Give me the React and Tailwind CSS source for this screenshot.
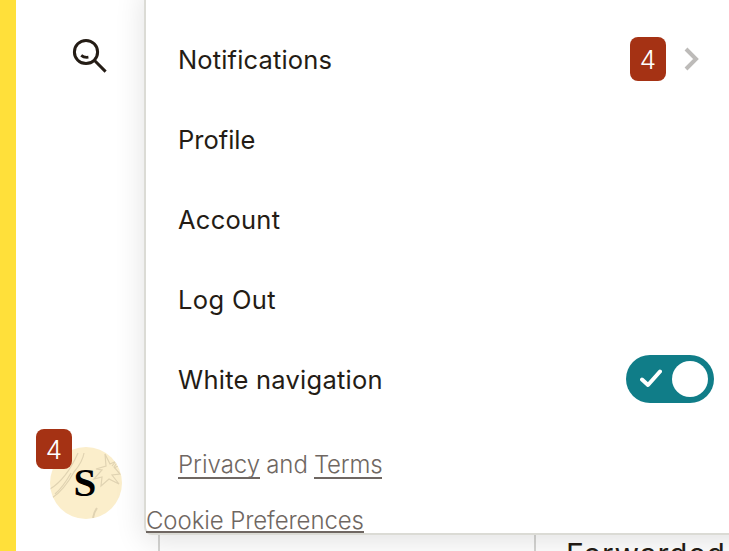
import { useState } from "react";

const Badge = ({ count, className }) => (
    <span className={`flex w-9 items-center justify-center rounded-lg bg-[#a53214] text-[26px] font-light text-white ${className}`}>
        {count}
    </span>
);

const SearchIcon = () => (
    <svg width="36" height="36" viewBox="0 0 36 36" fill="none" stroke="#241c15" strokeWidth="3">
        <circle cx="14" cy="14" r="11.6" />
        <path d="M22.3 22.3 L33.6 33.6" />
        <path d="M9.2 17.4 Q12 19.8 16.4 19.2" strokeWidth="2.8" />
    </svg>
);

const Avatar = () => (
    <div className="relative flex h-18 w-18 items-center justify-center overflow-hidden rounded-full bg-[#fbeecb]">
        <svg className="absolute inset-0" width="72" height="72" viewBox="0 0 72 72" fill="none" stroke="#e0d3b2" strokeWidth="1.2">
            <path d="M0 42 C10 36 20 24 28 6" />
            <path d="M2 51 C13 44 19 34 24 25 C29 19 33 13 34 6" />
            <path d="M5 47 C11 42 17 33 21 26" />
            <path d="M55 7 L60 17 L69 13 L64 20 L70 27 L62 28 L69 37 L59 32 L51 39 L52 30 L44 32 L52 23 L46 22 L56 19 Z" />
            <path d="M62 19 L66 14 M64 21 L70 18" />
            <path d="M47 61 Q44 65 43 71" strokeWidth="2" />
        </svg>
        <span className="relative right-px bottom-px font-['Liberation_Serif',serif] text-[41px] leading-none font-bold text-black">S</span>
    </div>
);

const Toggle = ({ checked, onChange }) => (
    <button
        type="button"
        role="switch"
        aria-checked={checked}
        aria-label="White navigation"
        onClick={() => onChange(!checked)}
        className="mb-0.5 flex h-12 w-22 items-center justify-between rounded-full bg-[#107d88] pr-1.5 pl-3.5"
    >
        <svg className="mb-px" width="22" height="19" viewBox="0 0 22 19" fill="none" stroke="#fff" strokeWidth="4" strokeLinecap="round" strokeLinejoin="round">
            <path d="M2 10.5 L8 16 L20 2.5" />
        </svg>
        <span className="h-9 w-9 rounded-full bg-white"></span>
    </button>
);

const items = [
    { label: "Notifications", style: "tracking-[0.15px]", count: 4 },
    { label: "Profile", style: "tracking-[0px]" },
    { label: "Account", style: "tracking-[0.25px]" },
    { label: "Log Out", style: "tracking-[0.35px]" },
];

const App = () => {
    const [whiteNav, setWhiteNav] = useState(true);

    return (
        <div className="relative flex h-[551px] w-[729px] overflow-hidden bg-white font-['Inter',sans-serif] text-[#241c15]">
            <div className="w-4 shrink-0 bg-[#ffe03a]"></div>

            <nav className="flex w-[142px] shrink-0 flex-col justify-between pt-[38px] pb-8">
                <div className="pl-14">
                    <SearchIcon />
                </div>
                <div className="relative pl-[34px]">
                    <Avatar />
                    <Badge count={4} className="absolute -top-[18px] left-5 h-10" />
                </div>
            </nav>

            <main className="flex flex-1 border-l-2 border-[#d5d5d3]">
                <div className="w-[376px] shrink-0 border-r-2 border-[#d5d5d3]"></div>
                <div className="flex flex-1 items-end pl-[30px]">
                    <span className="-mb-[21px] text-[30px] leading-9 tracking-[0.8px] whitespace-nowrap">Forwarded</span>
                </div>
            </main>

            <div className="absolute -top-4 left-36 h-[551px] w-[640px] rounded-lg border-2 border-[#dbdbd5] bg-white pt-[34px] text-[25.5px] shadow-[0_6px_30px_rgba(0,0,0,0.12)]">
                {items.map((item) => (
                    <div key={item.label} className="flex h-20 items-center pl-8">
                        <span className={`w-[452px] ${item.style}`}>{item.label}</span>
                        {item.count && (
                            <>
                                <Badge count={item.count} className="mb-0.5 h-11" />
                                <svg className="mb-0.5 ml-[18px]" width="16" height="24" viewBox="0 0 16 24" fill="none" stroke="#bdbbb9" strokeWidth="4">
                                    <path d="M2 2 L12 12 L2 22" />
                                </svg>
                            </>
                        )}
                    </div>
                ))}
                <div className="flex h-20 items-center pl-8">
                    <span className="w-[448px] tracking-[0.25px]">White navigation</span>
                    <Toggle checked={whiteNav} onChange={setWhiteNav} />
                </div>
                <div className="mt-[30px] flex gap-1.5 pl-8 text-[24px] leading-[30px] font-light text-[#6f6762]">
                    <a href="#" className="h-[29px] border-b-2 border-[#6f6762]">Privacy</a>
                    <span>and</span>
                    <a href="#" className="h-[29px] border-b-2 border-[#6f6762] tracking-[-0.2px]">Terms</a>
                </div>
                <div className="mt-[26px] flex text-[24px] leading-[30px] font-light tracking-[-0.1px] text-[#6f6762]">
                    <a href="#" className="h-[27px] border-b-2 border-[#6f6762]">Cookie Preferences</a>
                </div>
            </div>
        </div>
    );
};

export default App;
